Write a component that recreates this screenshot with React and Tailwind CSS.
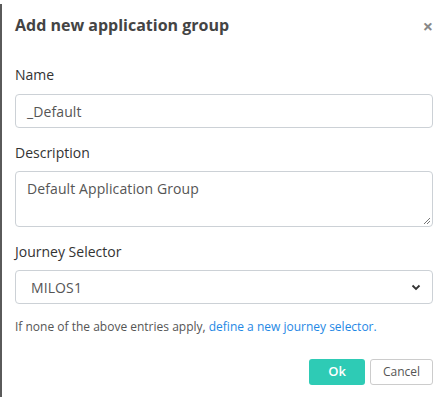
import React from "react";

export default function App() {
  return (
    <div className="relative w-[446px] h-[397px] bg-white overflow-hidden" style={{ fontFamily: '"Open Sans", sans-serif' }}>
      <div className="absolute left-0 top-[4px] bottom-0 w-[2px] bg-[#5a5a5a]" />
      <div className="pl-[15px] pr-[13px]">
        <div className="flex items-center justify-between h-[48px] pt-[1px]">
          <h2 className="text-[16px] font-bold text-[#444] leading-none">Add new application group</h2>
          <span className="text-[#888] text-[18px] font-bold leading-none pt-[3px]">×</span>
        </div>
        <div className="pt-[18px]">
          <label className="block text-[14px] text-[#333] leading-[18px]">Name</label>
          <div className="mt-[10px] h-[34px] border border-[#ccd1d6] rounded-[4px] flex items-center pl-[11px] text-[14px] text-[#555] tracking-[0.1px]">
            _Default
          </div>
        </div>
        <div className="pt-[16px]">
          <label className="block text-[14px] text-[#333] leading-[18px]">Description</label>
          <div className="relative mt-[9px] h-[56px] border border-[#ccd1d6] rounded-[4px] pl-[11px] pt-[6px] text-[14px] text-[#555] tracking-[0.1px]">
            Default Application Group
            <svg className="absolute right-[1px] bottom-[1px]" width="8" height="8" viewBox="0 0 8 8">
              <path d="M1 7 L7 1 M4 7 L7 4" stroke="#777" strokeWidth="1" />
            </svg>
          </div>
        </div>
        <div className="pt-[16px]">
          <label className="block text-[14px] text-[#333] leading-[18px]">Journey Selector</label>
          <div className="mt-[9px] h-[34px] border border-[#ccd1d6] rounded-[4px] flex items-center justify-between pl-[15px] pr-[11px] text-[14px] text-[#555] tracking-[0.1px]">
            <span>MILOS1</span>
            <svg width="10" height="7" viewBox="0 0 10 7">
              <path d="M1.5 1.5 L5 5 L8.5 1.5" fill="none" stroke="#333" strokeWidth="1.8" />
            </svg>
          </div>
        </div>
        <p className="mt-[15px] text-[12px] text-[#555] leading-[16px]">
          If none of the above entries apply, <span className="text-[#1e88e5]">define a new journey selector.</span>
        </p>
        <div className="flex justify-end gap-[5px] mt-[24px]">
          <button className="w-[56px] h-[26px] rounded-[3px] bg-[#2ecbb5] text-white text-[13px] font-semibold">Ok</button>
          <button className="w-[63px] h-[26px] rounded-[3px] bg-white border border-[#ccc] text-[#555] text-[12px]">Cancel</button>
        </div>
      </div>
    </div>
  );
}
